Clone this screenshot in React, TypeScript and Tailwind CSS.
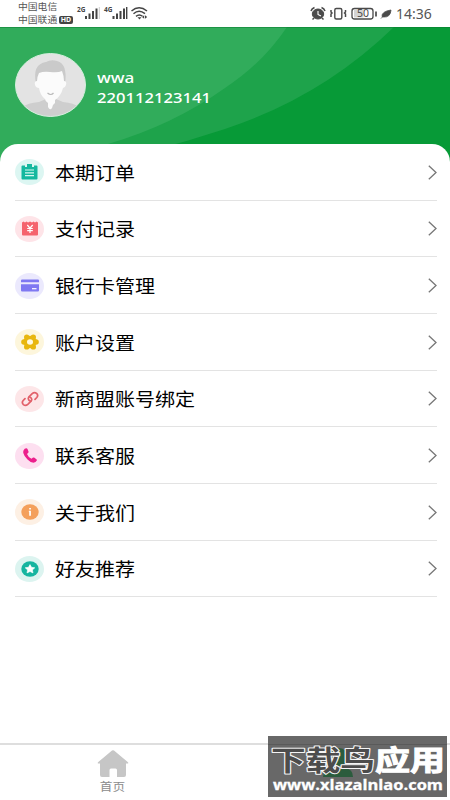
import type { ReactNode } from 'react';

interface MenuItem {
  title: string;
  tint: string;
  icon: ReactNode;
}

const menu: MenuItem[] = [
  { title: '本期订单', tint: 'bg-[#dcf6f2]', icon: <OrderIcon /> },
  { title: '支付记录', tint: 'bg-[#fee4e8]', icon: <PaymentIcon /> },
  { title: '银行卡管理', tint: 'bg-[#ebe9fd]', icon: <CardIcon /> },
  { title: '账户设置', tint: 'bg-[#fdf6dc]', icon: <GearIcon /> },
  { title: '新商盟账号绑定', tint: 'bg-[#fde6e8]', icon: <LinkIcon /> },
  { title: '联系客服', tint: 'bg-[#fddff0]', icon: <PhoneIcon /> },
  { title: '关于我们', tint: 'bg-[#fdf0e4]', icon: <InfoIcon /> },
  { title: '好友推荐', tint: 'bg-[#dcf4f0]', icon: <StarIcon /> },
];

export default function App() {
  return (
    <div className="relative flex h-[800px] w-[450px] flex-col overflow-hidden bg-white font-['Noto_Sans','Noto_Sans_CJK_SC',sans-serif]">
      <StatusBar />
      <Profile />

      {/* Menu */}
      <div className="z-10 -mt-6 flex-1 rounded-t-[18px] bg-white pr-[13px] pl-[15px]">
        {menu.map((item) => (
          <MenuRow key={item.title} {...item} />
        ))}
      </div>

      {/* Tab bar */}
      <div className="z-10 flex h-[57px] border-t-2 border-[#dedede] bg-white">
        <div className="flex w-1/2 flex-col items-center pt-[5px]">
          <svg width="32" height="27" viewBox="0 0 32 27" fill="#c6c6c6">
            <path d="M15 .6q1-.8 2 0l14 11.6q.9 1.2-.7 1.3H29V25q0 2-2 2h-7v-7q0-1.500-1.500-1.500h-4.500q-1.500 0-1.500 1.500v7H5q-2 0-2-2V13.500H1.700q-1.600-.1-.7-1.300z" />
          </svg>
          <span className="mt-[3px] scale-x-[1.1] text-[11.5px] leading-[14px] text-[#8c8c8c]">首页</span>
        </div>
        <div className="w-1/2" />
      </div>

      <Watermark />
    </div>
  );
}

function StatusBar() {
  return (
    <div className="flex h-[27px] shrink-0 bg-white text-[#555]">
      <div className="ml-[18px] w-[58px] pt-[1px] text-[9px] leading-[12.5px]">
        <p className="origin-left scale-x-[1.09]">中国电信</p>
        <div className="flex items-center">
          <span className="w-[41px]"><span className="block origin-left scale-x-[1.09] whitespace-nowrap">中国联通</span></span>
          <span className="mt-px flex h-[8px] w-[14px] items-center justify-center rounded-[2px] bg-[#444] text-[7px] font-bold text-white">HD</span>
        </div>
      </div>
      <svg width="76" height="27" viewBox="0 0 76 27" fill="#444" className="shrink-0">
        <text x="1" y="12" fontSize="6.500" fontWeight="700">2G</text>
        <path d="M9 16h2v3H9zM12.500 13.500h2V19h-2zM16 11h2v8h-2zM19.500 8.500h2V19h-2z" />
        <path d="M22.800 7h1V19h-1z" fill="#ccc" />
        <text x="28" y="12" fontSize="6.500" fontWeight="700">4G</text>
        <path d="M36.500 16h2v3h-2zM40 13.500h2V19h-2zM43.500 11h2v8h-2zM47 8.500h2V19h-2zM50 7h1.400v12H50z" />
        <g fill="none" stroke="#444" strokeWidth="1.500">
          <path d="M55.500 11q7.500-6.500 15.500 0M57.500 13.700q5.500-4.700 11.500 0M60 16.300q3.300-2.700 6.500 0" />
        </g>
        <path d="M61.500 17.300h4l-2 2.200zM66 17l2.200-1.700v3.400zM69 15.300l2.200 1.700-2.200 1.700z" />
      </svg>
      <div className="flex-1" />
      <svg width="86" height="27" viewBox="0 0 86 27" fill="none" stroke="#4a4a4a" className="shrink-0">
        {/* alarm */}
        <ellipse cx="8" cy="14" rx="5.700" ry="5" fill="#4a4a4a" />
        <path d="M8 11v3.500l3 1.500" stroke="#fff" strokeWidth="1.100" />
        <path d="M1 11q.8-2.500 3.500-3.500M15 11q-.8-2.500-3.500-3.500M4 18l-1.500 1.500M12 18l1.500 1.500" strokeWidth="1.500" />
        {/* vibrate */}
        <rect x="24.800" y="8.500" width="7" height="10.500" rx="1.500" strokeWidth="1.400" />
        <path d="M21 10v2l1 1-1 1v3M35.500 10v2l-1 1 1 1v3" strokeWidth="1.500" />
        {/* battery */}
        <rect x="42" y="8.500" width="21" height="10.500" rx="2.500" strokeWidth="1.300" />
        <path d="M44 10h9.500v7.500H44z" fill="#d4d4d4" stroke="none" />
        <path d="M66 11.500v5" strokeWidth="1.700" />
        <text x="47" y="17.300" fontSize="10" fill="#4a4a4a" stroke="none" textLength="12" lengthAdjust="spacingAndGlyphs">50</text>
        {/* leaf */}
        <path d="M72 16.500q-.5-5 9-6.500-.5 7.500-7.500 7zM71 18.500l4-4" fill="#4a4a4a" strokeWidth=".8" />
      </svg>
      <div className="w-[54px] pt-[5px] font-['Noto_Sans',sans-serif] text-[14px] leading-[18px]">
        <span className="block w-max origin-left">14:36</span>
      </div>
    </div>
  );
}

function Profile() {
  return (
    <div className="relative h-[141px] shrink-0 bg-[#079a37]">
      <svg width="450" height="141" viewBox="0 0 450 141" className="absolute inset-0">
        <path d="M0 0H394Q322 70 225 102Q150 127 70 141H0z" fill="#1ea34b" />
        <path d="M0 0H287Q263 36 225 61Q173 98 108 117L40 141H0z" fill="#31ac5b" />
        <path d="M0 .5H450" stroke="#0b7c31" opacity=".5" />
      </svg>
      <div className="relative flex items-center pl-[15px] pt-[26px]">
        <svg width="71" height="64" viewBox="0 0 71 64">
          <clipPath id="avatar">
            <ellipse cx="35.500" cy="32" rx="35" ry="31.500" />
          </clipPath>
          <g clipPath="url(#avatar)">
            <path d="M0 0h71v64H0z" fill="#e3e3e3" />
            <path d="M8 64V54q4-4 16-5l7-3h10l7 3q11 1 16 5v10z" fill="#cecece" />
            <path d="M21 31q-4-20 10-22 5-3 11-1 11 3 8 23z" fill="#cacaca" />
            <path d="M24 20q5-2 11-1 8 1 12-1 2 5 2 10 3 0 2 4-1 3-3 3-2 8-8 12v3q-3 2-3 5-2 3-4-1v-4q-3-2-3-4-5-4-6-11-3 0-4-3-1-4 2-4 0-4 2-8z" fill="#fbfbfb" />
            <path d="M32.500 40q3.500 3 6 0" fill="none" stroke="#b9b9b9" strokeWidth="1.200" />
          </g>
          <ellipse cx="35.500" cy="32" rx="35" ry="31.500" fill="none" stroke="#d5eedd" />
        </svg>
        <div className="ml-[11px] pt-[5px] text-[14px] leading-[20px] font-medium text-white">
          <p className="w-max origin-left scale-x-[1.22]">wwa</p>
          <p className="w-max origin-left scale-x-[1.185]">220112123141</p>
        </div>
      </div>
    </div>
  );
}

function MenuRow({ title, tint, icon }: MenuItem) {
  return (
    <div className="flex h-[56.67px] items-center border-b-[1.500px] border-[#e3e3e3] pt-px">
      <div className={`flex h-[26px] w-[29px] items-center justify-center rounded-[50%] ${tint}`}>{icon}</div>
      <span className="ml-[11px] origin-left scale-x-[1.11] whitespace-nowrap pt-px text-[18px] leading-[26px] text-black">{title}</span>
      <svg width="9" height="15" viewBox="0 0 9 15" fill="none" stroke="#777" strokeWidth="1.300" className="ml-auto">
        <path d="M.8.8L8 7.500.8 14.200" />
      </svg>
    </div>
  );
}

function OrderIcon() {
  return (
    <svg width="17" height="16" viewBox="0 0 17 16">
      <path d="M1.500 1.500H4V3h2V1.500h5V3h2V1.500h2.500q1 0 1 1v12q0 1-1 1h-14q-1 0-1-1v-12q0-1 1-1z" fill="#14b89f" />
      <path d="M6 0h5v2.500H6z" fill="#14b89f" />
      <path d="M4 6h9M4 8.800h9M4 11.600h9" stroke="#d4f7f0" strokeWidth="1.200" />
    </svg>
  );
}

function PaymentIcon() {
  return (
    <svg width="16" height="15" viewBox="0 0 16 15">
      <path d="M0 1.500L1.500.5 3 1.500 4.500.5 6 1.500 8 .5l2 1 1.500-1 1.500 1 1.500-1L16 1.500V13.500q0 1-1 1H1q-1 0-1-1z" fill="#f5636d" />
      <path d="M5.300 4L8 7.200 10.700 4M8 7v5M5.200 7.500h5.600M5.200 9.700h5.600" fill="none" stroke="#fff" strokeWidth="1.200" />
    </svg>
  );
}

function CardIcon() {
  return (
    <svg width="18" height="13" viewBox="0 0 18 13" fill="#7f78f2">
      <path d="M1 .5h16q1 0 1 1V3.300H0V1.500q0-1 1-1zM0 5.300h18v6.200q0 1-1 1H1q-1 0-1-1z" />
      <path d="M11 9.700h4.500" stroke="#fff" strokeWidth="1.200" />
    </svg>
  );
}

function GearIcon() {
  return (
    <svg width="18" height="16" viewBox="0 0 18 16" fill="#e8b70f">
      <ellipse cx="9" cy="8" rx="6.700" ry="6.200" />
      <circle cx="5.700" cy="3.100" r="2.700" />
      <circle cx="12.300" cy="3.100" r="2.700" />
      <circle cx="15.100" cy="8" r="2.700" />
      <circle cx="12.300" cy="12.900" r="2.700" />
      <circle cx="5.700" cy="12.900" r="2.700" />
      <circle cx="2.900" cy="8" r="2.700" />
      <ellipse cx="9" cy="8" rx="3" ry="2.700" fill="#fff9e0" />
    </svg>
  );
}

function LinkIcon() {
  return (
    <svg width="18" height="16" viewBox="0 0 18 16" fill="none" stroke="#e2606a" strokeWidth="1.700" strokeLinecap="round">
      <path d="M9.800 10.200Q7.500 9.500 7.300 7.800 7.200 6.600 8.200 5.700L11.200 2.600q2.200-1.900 4.400-.2 2 1.900.2 4.100L14 8.300" />
      <path d="M8.200 5.800q2.300.7 2.500 2.400.1 1.200-.9 2.100L6.800 13.400q-2.200 1.900-4.400.2-2-1.900-.2-4.100L4 7.700" />
    </svg>
  );
}

function PhoneIcon() {
  return (
    <svg width="14" height="15" viewBox="0 0 14 15" fill="#ec1f8c">
      <path d="M.5 2.500Q1.500.3 3.300.2q.8 0 1.200.8l1 2.500q.3.900-.5 1.500l-1 .9q1 3 4.500 4.800l1.200-1q.7-.5 1.400-.1l2.300 1.600q.8.600.4 1.400-1 2-3.300 2.200-3 0-6-3.200Q1 8 .3 5 .1 3.500.5 2.500z" />
    </svg>
  );
}

function InfoIcon() {
  return (
    <svg width="18" height="16" viewBox="0 0 18 16">
      <ellipse cx="9" cy="8" rx="8.700" ry="7.800" fill="#f4a05c" />
      <path d="M8.200 4h1.700v1.600H8.200zM7.800 6.700h2.100v5H8.200V7.700h-.4z" fill="#fff" />
    </svg>
  );
}

function StarIcon() {
  return (
    <svg width="18" height="16" viewBox="0 0 18 16">
      <ellipse cx="9" cy="8" rx="8.700" ry="7.800" fill="#16b5a0" />
      <path d="M9 3.600l1.500 2.700 3.300.5-2.400 2.100.6 3L9 10.500l-3 1.400.6-3-2.400-2.100 3.300-.5z" fill="#fff" stroke="#fff" strokeWidth=".6" strokeLinejoin="round" />
    </svg>
  );
}

function Watermark() {
  return (
    <svg width="179" height="61" viewBox="0 0 179 61" className="absolute left-[268px] top-[736px] z-20">
      <path d="M0 0h179v61H0z" fill="#686868" />
      <path d="M0 8.500h179" stroke="#5a5a5a" />
      {/* account tab icon showing through */}
      <g fill="#2b5c3d">
        <ellipse cx="71" cy="21" rx="9" ry="9" />
        <path d="M55 41q0-8 9-9h13q8 1 8 9z" />
      </g>
      <g fontFamily="'Noto Sans CJK SC', sans-serif" fontSize="28" fontWeight="700">
        <text x="3" y="35" fill="#4c4c4c" stroke="#f4f4f4" strokeWidth="2" strokeLinejoin="round" paintOrder="stroke" textLength="104" lengthAdjust="spacingAndGlyphs">下载鸟</text>
        <text x="107" y="35" fill="#fff" stroke="#fff" strokeWidth="1" textLength="70" lengthAdjust="spacingAndGlyphs">应用</text>
      </g>
      <text x="5" y="54" fill="#fff" fontFamily="'Open Sans', sans-serif" fontSize="14" fontWeight="700" stroke="#fff" strokeWidth=".3" textLength="170" lengthAdjust="spacingAndGlyphs">www.xlazalnlao.com</text>
    </svg>
  );
}
